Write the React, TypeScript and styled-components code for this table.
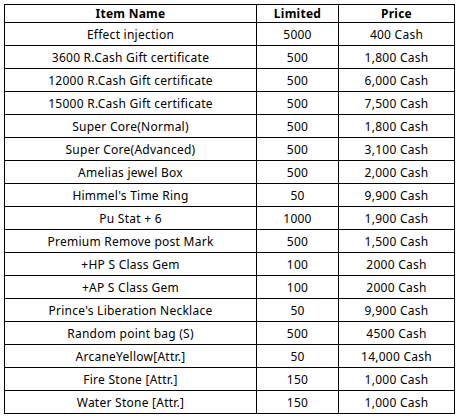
import { createGlobalStyle } from "styled-components"
import styled from "styled-components"

const items: [string, string, string][] = [
  ["Effect injection", "5000", "400 Cash"],
  ["3600 R.Cash Gift certificate", "500", "1,800 Cash"],
  ["12000 R.Cash Gift certificate", "500", "6,000 Cash"],
  ["15000 R.Cash Gift certificate", "500", "7,500 Cash"],
  ["Super Core(Normal)", "500", "1,800 Cash"],
  ["Super Core(Advanced)", "500", "3,100 Cash"],
  ["Amelias jewel Box", "500", "2,000 Cash"],
  ["Himmel's Time Ring", "50", "9,900 Cash"],
  ["Pu Stat + 6", "1000", "1,900 Cash"],
  ["Premium Remove post Mark", "500", "1,500 Cash"],
  ["+HP S Class Gem", "100", "2000 Cash"],
  ["+AP S Class Gem", "100", "2000 Cash"],
  ["Prince's Liberation Necklace", "50", "9,900 Cash"],
  ["Random point bag (S)", "500", "4500 Cash"],
  ["ArcaneYellow[Attr.]", "50", "14,000 Cash"],
  ["Fire Stone [Attr.]", "150", "1,000 Cash"],
  ["Water Stone [Attr.]", "150", "1,000 Cash"],
]

const GlobalStyle = createGlobalStyle`
  body {
    margin: 0;
    background: #fff;
    font-family: "Noto Sans", "DejaVu Sans", sans-serif;
  }
`

const Wrapper = styled.div`
  padding: 4px 0 0 4px;
`

const Table = styled.table`
  border-collapse: collapse;
  width: 447px;
  height: 410px;
  table-layout: fixed;
  font-size: 12px;
  letter-spacing: 0.25px;
  color: #000;
`

const HeadCell = styled.th<{ $width: number }>`
  width: ${(p) => p.$width}px;
  border: 1px solid #000;
  font-weight: bold;
  text-align: center;
  padding: 0;
`

const Cell = styled.td`
  border: 1px solid #000;
  text-align: center;
  padding: 0;
  white-space: nowrap;
`

export default function App() {
  return (
    <Wrapper>
      <GlobalStyle />
      <Table>
        <thead>
          <tr>
            <HeadCell $width={251}>Item Name</HeadCell>
            <HeadCell $width={81}>Limited</HeadCell>
            <HeadCell $width={115}>Price</HeadCell>
          </tr>
        </thead>
        <tbody>
          {items.map(([name, limit, price]) => (
            <tr key={name}>
              <Cell>{name}</Cell>
              <Cell>{limit}</Cell>
              <Cell>{price}</Cell>
            </tr>
          ))}
        </tbody>
      </Table>
    </Wrapper>
  )
}
